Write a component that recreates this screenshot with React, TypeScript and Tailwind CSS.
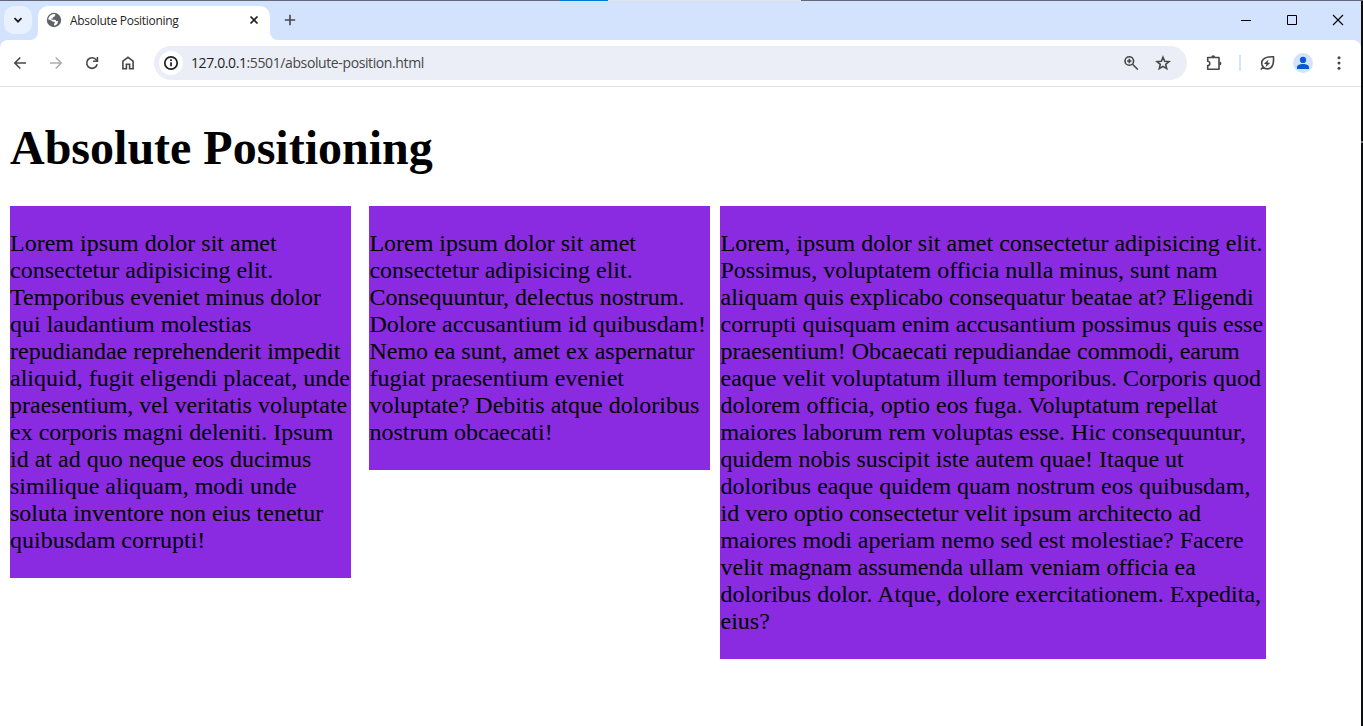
import type { ReactNode } from 'react';

const columns: { width: string; lines: string[] }[] = [
  {
    width: 'w-[341px] mr-[18px]',
    lines: [
      'Lorem ipsum dolor sit amet',
      'consectetur adipisicing elit.',
      'Temporibus eveniet minus dolor',
      'qui laudantium molestias',
      'repudiandae reprehenderit impedit',
      'aliquid, fugit eligendi placeat, unde',
      'praesentium, vel veritatis voluptate',
      'ex corporis magni deleniti. Ipsum',
      'id at ad quo neque eos ducimus',
      'similique aliquam, modi unde',
      'soluta inventore non eius tenetur',
      'quibusdam corrupti!',
    ],
  },
  {
    width: 'w-[341px] mr-[10px] pl-[0.4px]',
    lines: [
      'Lorem ipsum dolor sit amet',
      'consectetur adipisicing elit.',
      'Consequuntur, delectus nostrum.',
      'Dolore accusantium id quibusdam!',
      'Nemo ea sunt, amet ex aspernatur',
      'fugiat praesentium eveniet',
      'voluptate? Debitis atque doloribus',
      'nostrum obcaecati!',
    ],
  },
  {
    width: 'w-[546px] pl-[0.5px]',
    lines: [
      'Lorem, ipsum dolor sit amet consectetur adipisicing elit.',
      'Possimus, voluptatem officia nulla minus, sunt nam',
      'aliquam quis explicabo consequatur beatae at? Eligendi',
      'corrupti quisquam enim accusantium possimus quis esse',
      'praesentium! Obcaecati repudiandae commodi, earum',
      'eaque velit voluptatum illum temporibus. Corporis quod',
      'dolorem officia, optio eos fuga. Voluptatum repellat',
      'maiores laborum rem voluptas esse. Hic consequuntur,',
      'quidem nobis suscipit iste autem quae! Itaque ut',
      'doloribus eaque quidem quam nostrum eos quibusdam,',
      'id vero optio consectetur velit ipsum architecto ad',
      'maiores modi aperiam nemo sed est molestiae? Facere',
      'velit magnam assumenda ullam veniam officia ea',
      'doloribus dolor. Atque, dolore exercitationem. Expedita,',
      'eius?',
    ],
  },
];

function Icon({ children, className = 'text-[#474747]' }: { children: ReactNode; className?: string }) {
  return (
    <svg
      viewBox="0 0 20 20"
      fill="none"
      stroke="currentColor"
      strokeWidth="1.6"
      className={`h-5 w-5 shrink-0 ${className}`}
    >
      {children}
    </svg>
  );
}

function TabStrip() {
  return (
    <div className="flex h-[39px] items-start bg-[#d3e2fd]">
      <button className="mt-[5px] ml-1 flex h-7 w-7 items-center justify-center rounded-[10px] bg-[#e9f1fe]">
        <svg viewBox="0 0 10 10" className="h-[10px] w-[10px]" fill="none" stroke="#1f1f1f" strokeWidth="1.9">
          <path d="M1.5 3.2 5 6.7 8.5 3.2" />
        </svg>
      </button>
      <div className="ml-[-2px] flex h-full items-end">
        <svg viewBox="0 0 8 8" className="h-2 w-2" fill="#fff">
          <path d="M8 0v8H0a8 8 0 0 0 8-8z" />
        </svg>
      </div>
      <div className="mt-[5px] flex h-[34px] w-[232px] items-center rounded-t-[10px] bg-white pb-[6px]">
        <svg viewBox="0 0 16 16" className="ml-2 h-4 w-4 shrink-0">
          <circle cx="8" cy="8" r="7.2" fill="#5f6368" />
          <path
            d="M9.300 2.300 9 4.200 7.300 5l-.5 1.500H5.300l.4 1.300h3.500l1.300 1.500 1.500-.2-.6 2.600-1.700 1.500-1.600.4-.2-1.500 1-1-.5-1.300-2-.2L5 8.200 2.300 7.500C2.500 4.700 5 2.200 8 2.100z"
            fill="#fff"
          />
        </svg>
        <span className="ml-2 w-[170px] whitespace-nowrap pt-px font-['Open_Sans',sans-serif] text-[12px] tracking-[-0.29px] text-[#1f1f1f]">
          Absolute Positioning
        </span>
        <svg viewBox="0 0 10 10" className="ml-[9px] h-[10px] w-[10px] shrink-0" stroke="#1f1f1f" strokeWidth="1.7">
          <path d="M1.5 1.500 8.500 8.500M8.500 1.500 1.500 8.500" />
        </svg>
      </div>
      <div className="flex h-full items-end">
        <svg viewBox="0 0 8 8" className="h-2 w-2" fill="#fff">
          <path d="M0 0v8h8a8 8 0 0 1-8-8z" />
        </svg>
      </div>
      <svg viewBox="0 0 12 12" className="mt-[13px] ml-[6px] h-3 w-3" stroke="#474747" strokeWidth="1.6">
        <path d="M6 .8v10.400M.8 6h10.400" />
      </svg>
      <div className="mt-[13px] mr-[17px] ml-auto flex gap-[34px] text-black">
        <svg viewBox="0 0 12 12" className="h-3 w-3" stroke="currentColor">
          <path d="M1 6.500h10" />
        </svg>
        <svg viewBox="0 0 12 12" className="h-3 w-3" fill="none" stroke="currentColor">
          <path d="M1.500 1.500h9v9h-9z" />
        </svg>
        <svg viewBox="0 0 12 12" className="h-3 w-3" stroke="currentColor" strokeWidth="1.1">
          <path d="m1 1 10 10M11 1 1 11" />
        </svg>
      </div>
    </div>
  );
}

function Toolbar() {
  return (
    <div className="bg-[#d3e2fd]">
      <div className="flex h-[47px] items-center rounded-t-[8px] border-b border-[#e1e1e3] bg-white pl-[10px]">
        <Icon>
          <path d="M16 10H5M10.300 4.500 4.800 10l5.500 5.500" />
        </Icon>
        <Icon className="ml-4 text-[#adadad]">
          <path d="M4 10h11M9.700 4.500l5.500 5.500-5.500 5.500" />
        </Icon>
        <Icon className="ml-4 text-[#474747]">
          <path d="M15.200 11.200A5.300 5.300 0 1 1 14.300 6.900L15.300 8.100" />
          <path d="M15.400 4v4.300h-4.300" />
        </Icon>
        <Icon className="ml-4 text-[#474747]">
          <path d="M4.900 15.800V8.200L10 4.300l5.100 3.900v7.600h-3.500v-4.600H8.400v4.600z" />
        </Icon>
        <div className="ml-4 flex h-[34px] w-[1033px] items-center rounded-full bg-[#ebeef7] pl-[5px]">
          <div className="flex h-6 w-6 items-center justify-center rounded-full bg-white">
            <Icon className="text-[#1f1f1f]">
              <circle cx="10" cy="10" r="6.200" strokeWidth="1.700" />
              <path d="M10 9.200v4M10 6.300v1.600" strokeWidth="1.700" />
            </Icon>
          </div>
          <span className="ml-2 whitespace-nowrap pb-px font-['Open_Sans',sans-serif] text-[14px] tracking-[-0.39px] text-[#474747]">
            <span className="text-[#1f1f1f]">127.0.0.1</span>:5501/absolute-position.html
          </span>
          <Icon className="mr-3 ml-auto text-[#474747]">
            <circle cx="8.300" cy="8" r="4.300" />
            <path d="m11.500 11.200 5.300 5.300M8.300 5.800v4.400M6.100 8h4.400" />
          </Icon>
          <Icon className="mr-[14px] text-[#474747]">
            <path d="m10 4.200 1.650 4 4.350.35-3.300 2.850 1 4.250L10 13.350l-3.700 2.300 1-4.250L4 8.550l4.350-.35z" />
          </Icon>
        </div>
        <Icon className="ml-[17px] text-[#474747]">
          <path d="M3.700 4.500h11.300v11.700H3.700v-3.700c2.800 0 2.800-4.200 0-4.200z" strokeLinejoin="round" />
          <path d="M7.300 4.100a1.900 1.900 0 0 1 3.800 0zM15.500 8.500a1.900 1.900 0 0 1 0 3.800z" fill="currentColor" stroke="none" />
        </Icon>
        <div className="ml-[15px] h-4 w-[2px] bg-[#d3e2fd]" />
        <Icon className="ml-4 text-[#474747]">
          <path d="M16.400 3.800c.4 3.900.2 8-2 10.300a5.500 5.500 0 0 1-8 .1 5.400 5.400 0 0 1 .1-8C8.700 4 12.500 3.500 16.400 3.800zM6.300 14.200 3.800 16.500" />
          <path d="m11.600 6.500-4.700 4.200 2.600.5-1 3 4.700-4.300-2.700-.5z" fill="currentColor" stroke="none" />
        </Icon>
        <svg viewBox="0 0 20 20" className="ml-4 h-5 w-5 shrink-0">
          <circle cx="10" cy="10" r="10" fill="#d3e3fd" />
          <circle cx="10" cy="6.900" r="3.100" fill="#0b57d0" />
          <path d="M4 16v-1.700c0-2.300 3-3.200 6-3.200s6 .9 6 3.200V16z" fill="#0b57d0" />
        </svg>
        <Icon className="ml-4 text-[#474747]">
          <g fill="currentColor" stroke="none">
            <circle cx="10" cy="4.800" r="1.500" />
            <circle cx="10" cy="10" r="1.500" />
            <circle cx="10" cy="15.200" r="1.500" />
          </g>
        </Icon>
      </div>
    </div>
  );
}

export default function App() {
  return (
    <div className="flex h-[726px] w-[1363px] flex-col overflow-hidden bg-white">
      <div className="flex h-px shrink-0 bg-[#65687a]">
        <div className="ml-[560px] w-12 bg-[#0078d7]" />
        <div className="w-[193px] bg-[#e3e5e8]" />
      </div>
      <div className="flex min-h-0 flex-1">
        <div className="w-[1361px]">
          <TabStrip />
          <Toolbar />
          <main className="pt-[34px] pl-[10px] font-['Liberation_Serif',serif] text-black">
            <h1 className="text-[48px] leading-[54px] font-bold">Absolute Positioning</h1>
            <div className="mt-[31px] flex items-start">
              {columns.map((column) => (
                <div key={column.lines[2]} className={`${column.width} bg-[#8a2be2] py-6`}>
                  <p className="text-[24px] leading-[27px] whitespace-nowrap">
                    {column.lines.map((line) => (
                      <span key={line} className="block">
                        {line}
                      </span>
                    ))}
                  </p>
                </div>
              ))}
            </div>
          </main>
        </div>
        <div className="w-[2px] bg-[#0d0e10] pt-[140px]">
          <div className="h-[2px] bg-[#707070]" />
        </div>
      </div>
    </div>
  );
}
